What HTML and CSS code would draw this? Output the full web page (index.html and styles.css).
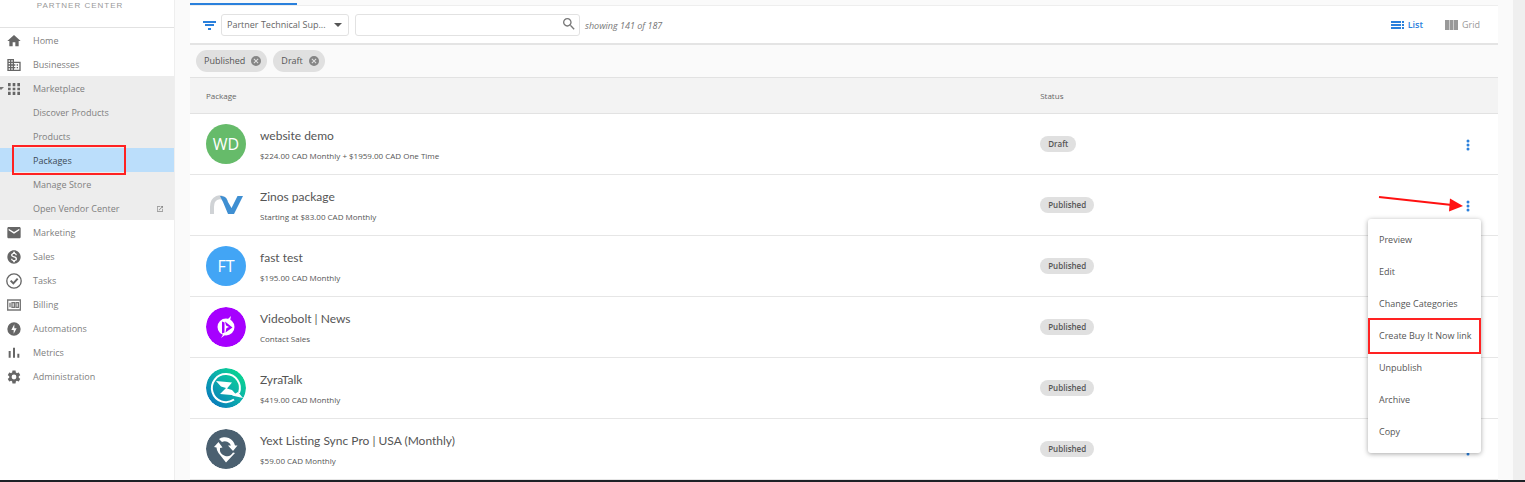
FILE: index.html
```html
<!DOCTYPE html>
<html lang="en">
<head>
<meta charset="utf-8">
<title>Packages</title>
<meta name="viewport" content="width=device-width, initial-scale=1">
<link rel="stylesheet" href="styles.css">
</head>
<body>
<div class="app">
  <nav class="sidebar" aria-label="Main">
    <div class="brand">PARTNER CENTER</div>
    <ul class="nav">
      <li><a class="nav-link" href="#"><svg class="icon" viewBox="0 0 24 24"><path d="M10 20v-6h4v6h5v-8h3L12 3 2 12h3v8z"/></svg>Home</a></li>
      <li><a class="nav-link" href="#"><svg class="icon" viewBox="0 0 24 24"><path d="M12 7V3H2v18h20V7H12zM6 19H4v-2h2v2zm0-4H4v-2h2v2zm0-4H4V9h2v2zm0-4H4V5h2v2zm4 12H8v-2h2v2zm0-4H8v-2h2v2zm0-4H8V9h2v2zm0-4H8V5h2v2zm10 12h-8v-2h2v-2h-2v-2h2v-2h-2V9h8v10zm-2-8h-2v2h2v-2zm0 4h-2v2h2v-2z"/></svg>Businesses</a></li>
      <li class="group">
        <a class="nav-link expanded" href="#"><svg class="icon" viewBox="0 0 24 24"><path d="M3 8h4V3H3v5zm7 13h4v-5h-4v5zm-7 0h4v-5H3v5zm0-7h4v-4H3v4zm7 0h4v-4h-4v4zm7-11v5h4V3h-4zm-7 5h4V3h-4v5zm7 6h4v-4h-4v4zm0 7h4v-5h-4v5z"/></svg>Marketplace</a>
        <ul class="subnav">
          <li><a class="sub-link" href="#">Discover Products</a></li>
          <li><a class="sub-link" href="#">Products</a></li>
          <li><a class="sub-link current" href="#" aria-current="page">Packages</a></li>
          <li><a class="sub-link" href="#">Manage Store</a></li>
          <li><a class="sub-link" href="#">Open Vendor Center<svg class="external" viewBox="0 0 24 24"><path d="M19 19H5V5h7V3H5c-1.11 0-2 .9-2 2v14c0 1.1.89 2 2 2h14c1.1 0 2-.9 2-2v-7h-2v7zM14 3v2h3.590l-9.830 9.830 1.410 1.410L19 6.410V10h2V3h-7z"/></svg></a></li>
        </ul>
      </li>
      <li><a class="nav-link" href="#"><svg class="icon" viewBox="0 0 24 24"><path d="M20 3H4c-1.100 0-2 .9-2 2v13c0 1.100.9 2 2 2h16c1.100 0 2-.9 2-2V5c0-1.100-.9-2-2-2zm0 5l-8 5-8-5V5.500l8 5 8-5V8z"/></svg>Marketing</a></li>
      <li><a class="nav-link" href="#"><svg class="icon" viewBox="0 0 24 24"><path d="M12 2C6.48 2 2 6.48 2 12s4.480 10 10 10 10-4.480 10-10S17.520 2 12 2zm1.410 16.090V20h-2.670v-1.930c-1.710-.36-3.160-1.460-3.270-3.400h1.960c.1 1.050.82 1.870 2.650 1.870 1.960 0 2.400-.98 2.400-1.590 0-.83-.44-1.610-2.670-2.140-2.480-.6-4.180-1.620-4.180-3.670 0-1.720 1.390-2.840 3.110-3.210V4h2.670v1.950c1.860.45 2.790 1.860 2.850 3.390H14.300c-.05-1.110-.64-1.870-2.220-1.870-1.500 0-2.400.68-2.400 1.640 0 .84.65 1.390 2.670 1.910s4.180 1.390 4.180 3.910c-.01 1.830-1.380 2.830-3.120 3.160z"/></svg>Sales</a></li>
      <li><a class="nav-link" href="#"><svg class="icon" viewBox="0 0 24 24" fill="none" stroke="#666"><circle cx="12" cy="12" r="10.800" stroke-width="2"/><path d="M7 11.500l4 4 6.500-7" stroke-width="3"/></svg>Tasks</a></li>
      <li><a class="nav-link" href="#"><svg class="icon" viewBox="0 0 24 24" fill="none" stroke="#777" stroke-width="2"><path d="M2.500 4.500h19v15h-19zM6 8.500v7M9 8.500h3.500v7H9zM15 8.500h3.500v7H15z"/></svg>Billing</a></li>
      <li><a class="nav-link" href="#"><svg class="icon" viewBox="0 0 24 24"><path d="M12 2a10 10 0 1 0 0 20 10 10 0 0 0 0-20zm-.5 17v-5.500H8L12.500 5v6H16z"/></svg>Automations</a></li>
      <li><a class="nav-link" href="#"><svg class="icon" viewBox="0 0 24 24"><path d="M4 9h3v10H4zM10.500 4h3v15h-3zM17 13h3v6h-3z"/></svg>Metrics</a></li>
      <li><a class="nav-link" href="#"><svg class="icon" viewBox="0 0 24 24"><path d="M19.140 12.940c.04-.3.060-.61.060-.94 0-.32-.02-.64-.07-.94l2.030-1.580c.18-.14.230-.41.120-.61l-1.920-3.320c-.12-.22-.37-.29-.59-.22l-2.390.96c-.5-.38-1.030-.7-1.620-.94l-.36-2.540c-.04-.24-.24-.41-.48-.41h-3.840c-.24 0-.43.170-.47.410l-.36 2.540c-.59.240-1.130.570-1.620.940l-2.390-.96c-.22-.08-.47 0-.59.220L2.740 8.870c-.12.210-.08.470.120.610l2.030 1.580c-.05.300-.09.630-.09.940s.02.640.070.940l-2.030 1.580c-.18.140-.23.410-.12.610l1.920 3.320c.12.220.370.290.590.220l2.390-.96c.5.380 1.030.700 1.620.940l.36 2.540c.05.240.240.410.480.410h3.840c.24 0 .440-.17.470-.41l.36-2.540c.59-.24 1.130-.56 1.620-.94l2.390.960c.22.080.470 0 .590-.22l1.920-3.320c.12-.22.070-.47-.12-.61l-2.010-1.580zM12 15.600a3.600 3.600 0 1 1 0-7.200 3.600 3.600 0 0 1 0 7.200z"/></svg>Administration</a></li>
    </ul>
  </nav>

  <main class="content">
    <div class="tabs"><span class="tab-ink"></span></div>
    <div class="toolbar">
      <svg class="filter-icon" viewBox="0 0 13 10"><path d="M0 1h13v2H0zM2 4h9v2H2zM5 8h3v2H5z"/></svg>
      <div class="select-wrap">
        <select class="select" aria-label="Market">
          <option>Partner Technical Sup...</option>
        </select>
        <span class="select-arrow"></span>
      </div>
      <div class="search">
        <input class="search-input" type="text" aria-label="Search packages">
        <svg class="search-icon" viewBox="0 0 24 24"><path d="M15.500 14h-.79l-.28-.27C15.410 12.590 16 11.110 16 9.500 16 5.910 13.090 3 9.500 3S3 5.910 3 9.500 5.910 16 9.500 16c1.610 0 3.090-.59 4.230-1.570l.27.280v.790l5 4.990L20.490 19l-4.990-5zm-6 0C7.010 14 5 11.990 5 9.500S7.010 5 9.500 5 14 7.010 14 9.500 11.990 14 9.500 14z"/></svg>
      </div>
      <span class="count">showing 141 of 187</span>
      <div class="views">
        <button class="view active" type="button"><svg class="view-icon" viewBox="0 0 13 8"><path d="M0 0h10v2H0zM0 3h10v2H0zM0 6h10v2H0zM11 0h2v2h-2zM11 3h2v2h-2zM11 6h2v2h-2z"/></svg>List</button>
        <button class="view" type="button"><svg class="view-icon tall" viewBox="0 0 13 10"><path d="M0 0h4v10H0zM4.500 0h4v10h-4zM9 0h4v10H9z"/></svg>Grid</button>
      </div>
    </div>

    <div class="chips">
      <span class="chip">Published<button class="chip-remove" type="button" aria-label="Remove Published"><svg viewBox="2 2 20 20"><path d="M12 2a10 10 0 1 0 0 20 10 10 0 0 0 0-20zm5 13.590L15.590 17 12 13.410 8.410 17 7 15.590 10.590 12 7 8.410 8.410 7 12 10.590 15.590 7 17 8.410 13.410 12z"/></svg></button></span>
      <span class="chip">Draft<button class="chip-remove" type="button" aria-label="Remove Draft"><svg viewBox="2 2 20 20"><path d="M12 2a10 10 0 1 0 0 20 10 10 0 0 0 0-20zm5 13.590L15.590 17 12 13.410 8.410 17 7 15.590 10.590 12 7 8.410 8.410 7 12 10.590 15.590 7 17 8.410 13.410 12z"/></svg></button></span>
    </div>

    <table class="packages">
      <thead>
        <tr><th class="col-package" scope="col">Package</th><th class="col-status" scope="col">Status</th><th class="col-actions" aria-label="Actions"></th></tr>
      </thead>
      <tbody>
        <tr>
          <td><div class="package"><span class="avatar green">WD</span><div><div class="name">website demo</div><div class="price">$224.00 CAD Monthly + $1959.00 CAD One Time</div></div></div></td>
          <td><span class="status">Draft</span></td>
          <td><div class="actions"><button class="more" type="button" aria-label="More actions"><svg viewBox="0 0 4 12"><circle cx="2" cy="2" r="1.500"/><circle cx="2" cy="6" r="1.500"/><circle cx="2" cy="10" r="1.500"/></svg></button></div></td>
        </tr>
        <tr>
          <td><div class="package"><svg class="avatar" viewBox="0 0 40 40" fill="none"><path d="M6 29V22c0-10 9-12 13-7" stroke="#d0d3d6" stroke-width="4"/><path d="M14 11c5 0 7 2 8 6l3.500 6 6-12h5.500L28 29h-6L17 17z" fill="#3f8fd2"/></svg><div><div class="name">Zinos package</div><div class="price">Starting at $83.00 CAD Monthly</div></div></div></td>
          <td><span class="status">Published</span></td>
          <td><div class="actions">
            <button class="more" type="button" aria-label="More actions" aria-expanded="true"><svg viewBox="0 0 4 12"><circle cx="2" cy="2" r="1.500"/><circle cx="2" cy="6" r="1.500"/><circle cx="2" cy="10" r="1.500"/></svg></button>
            <svg class="arrow" viewBox="0 0 86 20"><path d="M1 4l73 8" stroke="#f11" stroke-width="2"/><path d="M72 5.500L85 13l-14 5.500z" fill="#f11"/></svg>
            <div class="menu" role="menu">
              <button class="menu-item" role="menuitem" type="button">Preview</button>
              <button class="menu-item" role="menuitem" type="button">Edit</button>
              <button class="menu-item" role="menuitem" type="button">Change Categories</button>
              <button class="menu-item marked" role="menuitem" type="button">Create Buy It Now link</button>
              <button class="menu-item" role="menuitem" type="button">Unpublish</button>
              <button class="menu-item" role="menuitem" type="button">Archive</button>
              <button class="menu-item" role="menuitem" type="button">Copy</button>
            </div>
          </div></td>
        </tr>
        <tr>
          <td><div class="package"><span class="avatar blue">FT</span><div><div class="name">fast test</div><div class="price">$195.00 CAD Monthly</div></div></div></td>
          <td><span class="status">Published</span></td>
          <td><div class="actions"><button class="more" type="button" aria-label="More actions"><svg viewBox="0 0 4 12"><circle cx="2" cy="2" r="1.500"/><circle cx="2" cy="6" r="1.500"/><circle cx="2" cy="10" r="1.500"/></svg></button></div></td>
        </tr>
        <tr>
          <td><div class="package"><svg class="avatar" viewBox="0 0 40 40"><circle cx="20" cy="20" r="20" fill="#a600ff"/><circle cx="20" cy="20" r="8.500" fill="#fff"/><path d="M21 13l4-4-1 5zM18 26l-3 5 4-3z" fill="#fff"/><path d="M16 14.500l2.500 1v10l-2.500 1zM19 14.500l7.500 6-7 5 1-5z" fill="#a600ff"/><path d="M19 18l4 2-3.500 1.500z" fill="#fff"/></svg><div><div class="name">Videobolt | News</div><div class="price">Contact Sales</div></div></div></td>
          <td><span class="status">Published</span></td>
          <td><div class="actions"><button class="more" type="button" aria-label="More actions"><svg viewBox="0 0 4 12"><circle cx="2" cy="2" r="1.500"/><circle cx="2" cy="6" r="1.500"/><circle cx="2" cy="10" r="1.500"/></svg></button></div></td>
        </tr>
        <tr>
          <td><div class="package"><svg class="avatar" viewBox="0 0 40 40"><defs><linearGradient id="teal" x1="0" y1="1" x2="1" y2="0"><stop offset=".1" stop-color="#0878bd"/><stop offset=".55" stop-color="#0cb2aa"/><stop offset=".9" stop-color="#09d68f"/></linearGradient></defs><circle cx="20" cy="20" r="20" fill="url(#teal)"/><path d="M33 25A14 14 0 1 0 28 31.500" fill="none" stroke="#fff" stroke-width="2"/><path d="M32 24l5 6-11-2.500z" fill="#fff"/><path d="M10 13l16 1.500-5 6 5 1.500 5 5.500-17-1.500 6-6-5-1.500z" fill="#fff"/></svg><div><div class="name">ZyraTalk</div><div class="price">$419.00 CAD Monthly</div></div></div></td>
          <td><span class="status">Published</span></td>
          <td><div class="actions"><button class="more" type="button" aria-label="More actions"><svg viewBox="0 0 4 12"><circle cx="2" cy="2" r="1.500"/><circle cx="2" cy="6" r="1.500"/><circle cx="2" cy="10" r="1.500"/></svg></button></div></td>
        </tr>
        <tr>
          <td><div class="package"><svg class="avatar" viewBox="0 0 40 40"><circle cx="20" cy="20" r="20" fill="#4b6070"/><path d="M13 10a10.500 10.500 0 0 1 16 6.500h2.500L27 22l-5-5.500h3a6.500 6.500 0 0 0-9-3.500zM12.500 13l4 5.500-2.500.5a7 7 0 0 0 13 4.500l2 .5L20 33.500 12.500 24q-2-3-2-5.500L8 18z" fill="#fff"/></svg><div><div class="name">Yext Listing Sync Pro | USA (Monthly)</div><div class="price">$59.00 CAD Monthly</div></div></div></td>
          <td><span class="status">Published</span></td>
          <td><div class="actions"><button class="more" type="button" aria-label="More actions"><svg viewBox="0 0 4 12"><circle cx="2" cy="2" r="1.500"/><circle cx="2" cy="6" r="1.500"/><circle cx="2" cy="10" r="1.500"/></svg></button></div></td>
        </tr>
      </tbody>
    </table>
  </main>
  <div class="gutter"></div>
</div>
<footer class="edge"></footer>
</body>
</html>
```
FILE: styles.css
```css
* { box-sizing: border-box; }
body {
  margin: 0;
  min-height: 100vh;
  display: flex;
  flex-direction: column;
  background: #fafafa;
  color: #555;
  font: 9px/16px "Open Sans", "Noto Sans", sans-serif;
}
button, select, input { font: inherit; color: inherit; }
button { border: 0; background: none; padding: 0; cursor: pointer; }
a { color: inherit; text-decoration: none; }
ul { list-style: none; margin: 0; padding: 0; }
svg { display: block; }

.app { display: flex; flex: 1; }
.edge { height: 2px; background: #1d2126; }
.gutter { width: 12px; background: #efefef; }

.sidebar {
  width: 175px;
  flex: none;
  background: #fff;
  border-right: 1px solid #eee;
  color: #808080;
}
.brand {
  height: 28px;
  padding: 0 14px 14px 0;
  border-bottom: 1px solid #e2e2e2;
  font: 8px/12px "Liberation Sans", Arial, sans-serif;
  letter-spacing: 1px;
  text-align: center;
  color: #999;
}
.nav-link, .sub-link {
  display: flex;
  align-items: center;
  height: 24px;
  position: relative;
}
.nav-link { gap: 11px; padding: 2px 0 0 6px; }
.nav-link.expanded::before {
  content: "";
  position: absolute;
  left: -2px;
  top: 11px;
  border: 3px solid transparent;
  border-top-color: #777;
}
.icon { width: 16px; height: 16px; fill: #666; }
.icon[fill="none"] { fill: none; }
.group { background: #ededed; }
.sub-link { padding: 2px 10px 0 33px; justify-content: space-between; }
.external { width: 8px; height: 8px; fill: #888; }
.current { background: #bbdefb; color: #3d4a55; }
.current::after {
  content: "";
  position: absolute;
  left: 12px;
  right: 48px;
  top: -3px;
  bottom: -3px;
  border: 2px solid #f22;
}

.content { flex: 1; padding: 0 15px; min-width: 0; }
.tabs { display: flex; align-items: flex-end; height: 6px; border-bottom: 1px solid #eee; }
.tab-ink { width: 107px; height: 2px; background: #2a80dc; }
.toolbar {
  display: flex;
  align-items: center;
  height: 39px;
  padding: 0 18px 0 13px;
  background: #fff;
  border-bottom: 2px solid #e4e4e4;
}
.filter-icon { width: 13px; height: 10px; margin-right: 5px; fill: #2a80dc; }
.select-wrap { position: relative; width: 128px; margin-right: 6px; }
.select {
  appearance: none;
  display: block;
  width: 100%;
  height: 22px;
  padding: 0 5px;
  border: 1px solid #e2e2e2;
  border-radius: 3px;
  background: #fff;
  color: #666;
}
.select-arrow {
  position: absolute;
  right: 7px;
  top: 9px;
  border: 4px solid transparent;
  border-top-color: #555;
  pointer-events: none;
}
.search { position: relative; width: 225px; margin-right: 5px; }
.search-input {
  display: block;
  width: 100%;
  height: 22px;
  padding: 0 24px 0 6px;
  border: 1px solid #e2e2e2;
  border-radius: 3px;
  background: #fff;
}
.search-icon { position: absolute; right: 3px; top: 2px; width: 16px; height: 16px; fill: #777; }
.count { font-style: italic; color: #777; padding-top: 2px; }
.views { display: flex; gap: 22px; margin-left: auto; }
.view { display: flex; align-items: center; gap: 4px; color: #999; }
.view.active { color: #2a80dc; font-weight: 600; }
.view-icon { width: 13px; height: 8px; fill: currentColor; }
.view-icon.tall { height: 10px; }

.chips { display: flex; align-items: center; gap: 6px; height: 32px; padding-left: 6px; }
.chip {
  display: flex;
  align-items: center;
  gap: 6px;
  height: 22px;
  padding: 0 6px 0 8px;
  border-radius: 11px;
  background: #e0e0e0;
  color: #555;
}
.chip-remove svg { width: 10px; height: 10px; fill: #858585; }

.packages { width: 100%; table-layout: fixed; border-collapse: collapse; background: #fff; }
.packages th {
  height: 36px;
  padding: 0;
  text-align: left;
  font-size: 8px;
  font-weight: 500;
  color: #666;
  background: #f3f3f3;
  border-top: 1px solid #e2e2e2;
  border-bottom: 1px solid #e2e2e2;
}
.packages th.col-package { width: 65%; padding-left: 16px; }
.col-actions { width: 60px; }
.packages td { height: 61px; padding: 0; border-bottom: 1px solid #e6e6e6; }
.package { display: flex; align-items: center; gap: 14px; padding-left: 16px; }
.avatar {
  width: 40px;
  height: 40px;
  flex: none;
  border-radius: 50%;
  color: #fff;
  font-size: 16px;
  line-height: 40px;
  text-align: center;
}
.green { background: #66bb6a; }
.blue { background: #42a5f5; }
.name { padding-top: 4px; font: 12px/20px Lato, "Open Sans", sans-serif; color: #555; }
.price { font-size: 8px; line-height: 20px; color: #555; }
.status {
  display: inline-block;
  padding: 0 8px;
  border-radius: 8px;
  background: #e0e0e0;
  font-size: 8px;
  font-weight: 600;
  vertical-align: middle;
}
.actions { position: relative; display: flex; justify-content: flex-end; padding-right: 28px; }
.more { padding-top: 2px; }
.more svg { width: 4px; height: 12px; fill: #2a80dc; }

.menu {
  position: absolute;
  z-index: 1;
  right: 17px;
  top: 21px;
  width: 113px;
  padding: 5px 0;
  border-radius: 3px;
  background: #fff;
  box-shadow: 0 1px 5px rgba(0, 0, 0, .35);
}
.menu-item { display: block; width: 100%; height: 32px; padding: 0 11px; text-align: left; position: relative; white-space: nowrap; }
.marked::after { content: ""; position: absolute; inset: -2px 0; border: 2px solid #f22; }
.arrow { position: absolute; right: 34px; top: -5px; width: 86px; height: 20px; }
```
